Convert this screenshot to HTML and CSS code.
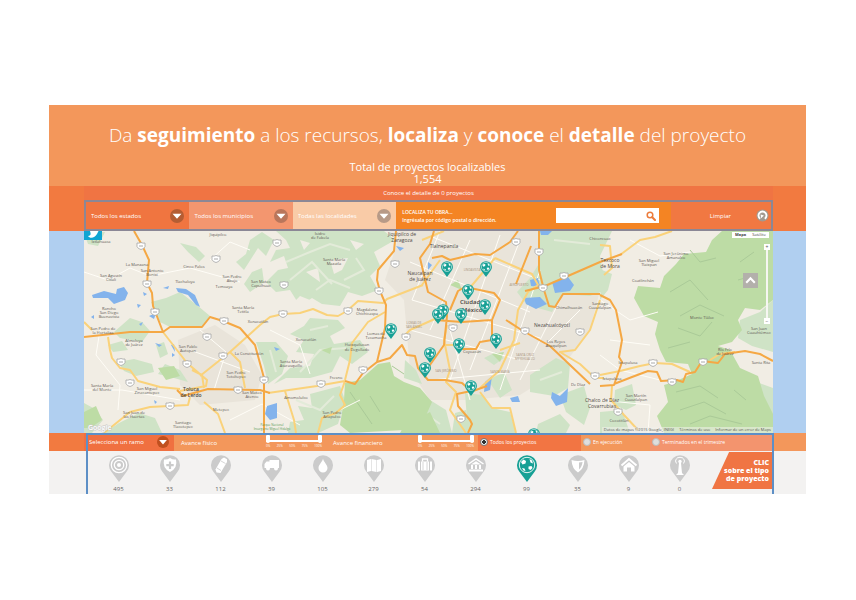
FILE: index.html
```html
<!DOCTYPE html>
<html lang="es">
<head>
<meta charset="utf-8">
<title>Proyectos localizables</title>
<link rel="stylesheet" href="styles.css">
</head>
<body>
<svg class="defs" aria-hidden="true">
  <symbol id="pin" viewBox="0 0 20 27"><path d="M10 27L2.6 17A10 10 0 1 1 17.4 17Z" fill="currentColor"/></symbol>
  <symbol id="ball" viewBox="0 0 20 27">
    <path d="M10 27L2.6 17A10 10 0 1 1 17.4 17Z" fill="#17a095"/>
    <circle cx="10" cy="10" r="7.7" fill="#17a095" stroke="#e4f4f2" stroke-width="1"/>
    <path d="M4 7L6.500 4.500L9 6L8.500 8.500L5.500 9.500ZM12.500 4L15 5.500L16 8.500L13.500 7.500ZM11.500 11.500L14.500 11L15.500 13L13.500 15L11.500 14ZM5 13L7.500 13.500L8.500 16L6.500 15.500Z" fill="#fff"/>
  </symbol>
  <symbol id="drop" viewBox="0 0 14 14"><circle cx="7" cy="7" r="7" fill="currentColor"/><path d="M2.500 4.800H11.500L7 9.800Z" fill="#fff"/></symbol>
  <symbol id="shield" viewBox="0 0 10 8"><path d="M1 1Q3 1.500 5 .5Q7 1.500 9 1V4.500Q8 7 5 7.500Q2 7 1 4.500Z" fill="#fff" stroke="#a5a5a5" stroke-width=".8"/><path d="M3 4H7" stroke="#aaa"/></symbol>
</svg>

<main class="page">
  <header class="hero">
    <h1>Da <b>seguimiento</b> a los recursos, <b>localiza</b> y <b>conoce</b> el <b>detalle</b> del proyecto</h1>
    <p class="total">Total de proyectos localizables<br><span>1,554</span></p>
  </header>

  <section class="band band-search">
    <div class="inner">
      <p class="note">Conoce el detalle de 0 proyectos</p>
      <form class="search">
        <label class="pick pick-a"><select aria-label="Estado"><option>Todos los estados</option></select><svg><use href="#drop"/></svg></label>
        <label class="pick pick-b"><select aria-label="Municipio"><option>Todos los municipios</option></select><svg><use href="#drop"/></svg></label>
        <label class="pick pick-c"><select aria-label="Localidad"><option>Todas las localidades</option></select><svg><use href="#drop"/></svg></label>
        <div class="locate">
          <label for="obra">LOCALIZA TU OBRA...<br>Ingrésala por código postal o dirección.</label>
          <div class="field">
            <input id="obra" type="text">
            <button type="button" aria-label="Buscar"><svg viewBox="0 0 10 10"><circle cx="4" cy="4" r="2.800" fill="none" stroke="#ec7c3c" stroke-width="1.500"/><path d="M6.200 6.200L9 9" stroke="#ec7c3c" stroke-width="2" stroke-linecap="round"/></svg></button>
          </div>
        </div>
        <button class="clear" type="reset"><span>Limpiar</span><svg viewBox="0 0 14 14"><circle cx="7" cy="7" r="6.500" fill="#a29a90"/><path d="M4.500 10.500A4.300 4.300 0 1 1 9.500 10.500" fill="none" stroke="#fff" stroke-width="2"/><path d="M5 6L8.500 7L5.500 10Z" fill="#fff"/></svg></button>
      </form>
    </div>
  </section>

  <section class="band band-map">
    <div class="inner map">
      <svg class="canvas" viewBox="84 231 689 202" preserveAspectRatio="xMidYMid slice" role="img" aria-label="Mapa">
        <rect x="84" y="231" width="689" height="202" fill="#f1ede4"/>
        <g fill="#e9e4da">
          <path d="M400 231H538L600 290L590 330L560 370L520 395L470 400L430 400L410 370L404 300L385 280L395 250Z"/>
          <path d="M178 340L215 325L245 345L262 375L255 400L200 405L180 385Z"/>
        </g>
        <g fill="#cfe3c6">
          <path d="M538 231H612L600 256L606 290L590 296L562 294L552 312L527 305L517 292L530 278L540 262Z"/>
          <path d="M151 302L166 298L180 292L198 306L210 316L202 327L170 327L160 322Z"/>
          <path d="M114 332L130 318L142 322L150 331L142 342L120 338ZM108 345L122 341L128 350L113 352Z"/>
          <path d="M118 362L134 359L152 364L154 372L136 376L124 371ZM156 345L164 342L168 354L160 358ZM165 364L180 370L188 382L174 378L158 374Z"/>
          <path d="M84 403L95 409L103 420L92 433H84ZM119 423L139 413L155 418L162 433H104ZM84 233L105 232L98 246L88 244ZM180 243L196 247L205 256L199 262L188 252Z"/>
          <path d="M250 240L262 232L274 240L266 256L258 248L244 270L236 262L246 254ZM252 272L262 268L264 282L250 292L244 284Z"/>
          <path d="M276 231H384L395 240L374 252L380 266L370 276L378 290L362 296L348 292L340 306L322 304L312 298L300 306L290 290L276 292L266 282L278 270L288 268L284 256L270 262L276 250L290 248L286 240Z"/>
          <path d="M310 318L338 320L345 328L330 336L334 344L360 340L368 352L352 364L340 356L332 372L310 378L286 378L274 384L290 368L310 366L314 354L296 352L304 340L290 334L304 326Z"/>
          <path d="M256 342L276 342L288 356L282 374L268 384L264 366ZM310 394L340 386L345 400L338 424L318 433H288L290 422L304 420L298 406L312 408Z"/>
          <path d="M405 360L416 370L422 384L404 378ZM405 408L430 400L446 410L452 433H404ZM455 413L466 410L470 433H452ZM488 380L504 372L512 390L500 398ZM530 375L556 358L570 364L568 388L554 396L530 392Z"/>
          <path d="M465 393L483 395L492 408L510 412L516 433H468ZM538 424L560 414L570 425L566 433H536ZM560 395L584 386L590 408L584 425L566 412ZM484 358L496 352L504 358L494 365ZM615 390L632 384L636 405L626 410L614 405ZM600 412L622 410L630 433H600Z"/>
          <path d="M740 320L760 312L773 300V352L752 346L738 338ZM740 376L773 388V418L760 410ZM602 270L612 274L608 290L600 300Z"/>
        </g>
        <g fill="#f1ede4">
          <path d="M300 240L310 243L304 250ZM330 260L348 258L342 270L334 274ZM306 272L318 268L320 282ZM350 240L364 244L356 250ZM286 310L300 296L320 304L300 312Z"/>
        </g>
        <g fill="none" stroke="#e3ebd9" stroke-width="2">
          <path d="M286 262L310 252L330 244L350 250M290 280L312 262L332 284M344 280L364 270L356 258M316 290L330 280L350 288M300 372L320 350L346 348M310 330L328 326M296 400L320 410L334 396M540 380L562 372M554 240L590 244M420 410L440 424M270 350L276 372"/>
        </g>
        <g fill="#bddca5">
          <path d="M722 231H773V300L760 310L745 308L738 320L742 330L732 342L718 346L730 350L740 368L758 376L764 396L773 414V433H664L657 416L668 402L664 385L674 382L692 374L688 364L666 362L660 350L655 334L658 322L644 316L634 298L638 286L660 288L664 276L676 264L684 254L706 252L712 240Z"/>
          <path d="M345 383L360 380L378 364L390 362L394 376L404 382L420 388L432 402L424 420L404 430L350 433L340 425L344 400ZM321 350L332 347L330 354ZM158 368L174 366L180 376L166 380ZM84 412L96 406L102 420L90 428L84 428ZM492 354L504 352L500 362ZM450 285L458 280L462 290ZM404 426L430 412L440 433H400Z"/>
        </g>
        <g fill="none" stroke="#aaca98">
          <path d="M690 250L700 262L716 258M670 292L690 280L708 300M680 316L700 305L724 316M678 328L700 336L712 322M668 348L690 342M676 392L700 386L718 398M680 410L704 402L726 414M690 424L710 416L742 424M734 390L746 400M740 262L754 252M738 280L752 276M370 396L380 412M350 392L372 424M392 366L404 374"/>
        </g>
        <g fill="none" stroke="#fffdf7">
          <path d="M84 272L108 280L130 268L150 276L190 268L240 282M100 330L96 355L120 385L118 410M84 390L122 390L180 400M210 260L230 242L250 250M200 330L226 352L214 390M190 350L250 372M230 420L262 404L300 425M270 330L300 345L310 374M340 410L360 400M600 300L630 320L658 312M610 340L650 345M600 355L620 370L660 380M630 240L660 256L690 252M600 400L650 405L648 433"/>
          <path d="M430 236L540 280M410 262L530 312M412 300L540 338M410 330L520 360M432 380L540 370M440 231L412 300M470 240L430 330M500 235L450 380M520 240L470 370M540 270L500 390M560 300L520 380M450 330L470 400M580 310L545 345"/>
        </g>
        <g fill="#83b3ec">
          <path d="M92 295L104 291L116 294L117 289L124 287L128 293L125 300L114 304L108 298L93 298Z"/>
          <path d="M176 288L186 289L195 295L200 307L196 305L188 295L178 292ZM91 317L94 315L94 319ZM163 288L169 286L168 289ZM137 304L141 305L138 308ZM143 292L147 294L144 296ZM149 316L156 313L154 319ZM155 343L162 345L159 347ZM171 345L174 344L175 352ZM172 353L175 355L172 357ZM154 400L157 402L155 404ZM139 324L143 322L141 326Z"/>
          <path d="M267 406L277 403L277 418L270 420L265 414ZM552 282L568 277L574 285L570 291L555 293ZM530 280L538 278L540 287L531 286ZM524 298L540 297L547 304L536 309L526 304ZM540 231H552L548 235H541ZM595 396L598 389ZM552 392L560 396L568 388L567 402L556 406L551 398ZM485 382L492 376L490 390L484 392ZM510 398L518 396L520 402L512 402ZM396 246L404 248L400 251ZM428 262L432 265L428 270ZM274 347L280 349L276 351Z"/>
        </g>
        <g fill="none" stroke="#fad27a" stroke-width="2" stroke-linejoin="round">
          <path d="M84 322L92 330M108 337L110 350L112 358L120 368L130 370L138 381L160 387L180 389M163 332L187 363L207 380L206 386L180 391M200 376L230 352L260 325L270 317L283 314L300 313L313 309L327 315L338 316L347 311L358 301L383 303L387 299L423 285M192 370L202 375L204 388M230 352L240 362L245 388M104 433L130 412L150 407L188 405L190 397M204 402L218 414L225 433M268 393L317 386L345 381M285 391L294 420L296 433M345 381L340 395L345 405L336 413L322 418L318 433M345 380L350 360L352 343L368 322L385 312"/>
          <path d="M422 240L444 231M495 258L532 274L538 285L528 292L518 310L514 340L500 370L480 388M468 290L495 258M437 318L410 330L404 336M447 325L444 340L450 370L446 382L456 392L450 410L466 433M480 392L492 408L510 408L516 433M444 345L459 345M600 300L590 330L575 350L560 352L580 364L595 378L604 378M620 255L640 240L655 237L672 231M600 245L610 246L612 268L604 275M600 375L620 371L640 366L655 363L672 364L690 372M612 386L611 400L624 415L638 430M710 360L720 354L735 352M520 343L500 350M440 260L422 285"/>
        </g>
        <g fill="none" stroke="#f5a844" stroke-width="2" stroke-linejoin="round">
          <path d="M134 231L142 245L149 260L147 283L152 293L153 306L163 332L170 327L202 327L210 317L223 321L240 328L255 345L264 378L264 433M84 337L130 332L163 332M177 390L183 396L208 389L260 390L270 393M396 231L394 251L378 270L377 280L380 291L386 305L385 328L377 362M345 381L355 384L363 373L377 362L390 358L402 345L407 355L415 356L418 368L428 380L445 380L462 383L471 391L457 394L458 406L470 420L472 424L468 433"/>
          <path d="M434 231L430 244L420 258L428 292L446 302L447 316L444 345L425 372M432 258L442 256L450 260L475 254L490 255L510 242L518 231M539 231V270L544 290L549 306L555 307L563 294L600 294M525 291L545 286L600 262M531 246L516 284M435 320L462 322L492 320L500 300L494 293L465 287L458 291L450 310M492 320V340L480 342L476 349L459 349M506 320L523 331L550 346L590 384M600 295L610 300L616 310L622 340L619 357L622 362L614 385L600 386M614 384L632 377L648 371L657 372L661 381L677 380L683 382L686 374L695 372L702 361L718 363L725 354L745 351L760 354L773 361M487 386L473 391M600 262L622 254"/>
        </g>
        <g class="roads">
          <use href="#shield" x="136" y="242" width="10" height="8"/><use href="#shield" x="211" y="255" width="10" height="8"/><use href="#shield" x="142" y="280" width="10" height="8"/><use href="#shield" x="150" y="308" width="10" height="8"/><use href="#shield" x="202" y="333" width="10" height="8"/><use href="#shield" x="219" y="317" width="10" height="8"/><use href="#shield" x="116" y="358" width="10" height="8"/><use href="#shield" x="182" y="360" width="10" height="8"/><use href="#shield" x="218" y="352" width="10" height="8"/><use href="#shield" x="125" y="379" width="10" height="8"/><use href="#shield" x="233" y="386" width="10" height="8"/><use href="#shield" x="165" y="402" width="10" height="8"/>
          <use href="#shield" x="272" y="239" width="10" height="8"/><use href="#shield" x="279" y="281" width="10" height="8"/><use href="#shield" x="278" y="310" width="10" height="8"/><use href="#shield" x="343" y="307" width="10" height="8"/><use href="#shield" x="374" y="287" width="10" height="8"/><use href="#shield" x="390" y="260" width="10" height="8"/><use href="#shield" x="401" y="333" width="10" height="8"/><use href="#shield" x="358" y="366" width="10" height="8"/><use href="#shield" x="316" y="380" width="10" height="8"/><use href="#shield" x="259" y="376" width="10" height="8"/>
          <use href="#shield" x="511" y="238" width="10" height="8"/><use href="#shield" x="534" y="248" width="10" height="8"/><use href="#shield" x="559" y="272" width="10" height="8"/><use href="#shield" x="538" y="284" width="10" height="8"/><use href="#shield" x="520" y="327" width="10" height="8"/><use href="#shield" x="575" y="328" width="10" height="8"/><use href="#shield" x="590" y="372" width="10" height="8"/><use href="#shield" x="448" y="324" width="10" height="8"/><use href="#shield" x="456" y="415" width="10" height="8"/><use href="#shield" x="648" y="359" width="10" height="8"/><use href="#shield" x="698" y="358" width="10" height="8"/><use href="#shield" x="667" y="378" width="10" height="8"/><use href="#shield" x="613" y="408" width="10" height="8"/>
        </g>
        <g class="names">
          <text x="101" y="243">Ixtlahuaca</text><text x="218" y="236">Jiquipilco</text><text x="137" y="266">La Manzana</text><text x="152" y="272">San Antonio<tspan x="152" dy="4">Bonixi</tspan></text><text x="194" y="268">Cinco Palos</text><text x="111" y="277">San Agustín<tspan x="111" dy="4">Citlali</tspan></text><text x="185" y="283">Tlachaloya</text><text x="232" y="278">San Pedro<tspan x="232" dy="4">Abajo</tspan></text><text x="224" y="288">Temoaya</text><text x="109" y="310">Rancho<tspan x="109" dy="4">San Diego</tspan><tspan x="109" dy="4">Buenavista</tspan></text><text x="243" y="309">Santa María<tspan x="243" dy="4">Tetitla</tspan></text><text x="103" y="330">San Pedro de<tspan x="103" dy="4">la Hortaliza</tspan></text><text x="134" y="342">Almoloya<tspan x="134" dy="4">de Juárez</tspan></text><text x="188" y="348">San Pablo<tspan x="188" dy="4">Autopan</tspan></text><text x="249" y="355">La Constitución</text><text x="236" y="374">San Pedro<tspan x="236" dy="4">Totoltepec</tspan></text><text x="102" y="387">Santa María<tspan x="102" dy="4">del Monte</tspan></text><text x="147" y="390">San Miguel<tspan x="147" dy="4">Zinacantepec</tspan></text><text x="134" y="414">San Juan de<tspan x="134" dy="4">las Huertas</tspan></text><text x="183" y="424">Santiago<tspan x="183" dy="4">Tlacotepec</tspan></text><text x="221" y="411">Metepec</text><text x="252" y="394">San Mateo<tspan x="252" dy="4">Atenco</tspan></text>
          <text x="320" y="235">Isidro<tspan x="320" dy="4">de Fabela</tspan></text><text x="334" y="261">Santa María<tspan x="334" dy="4">Mazatla</tspan></text><text x="261" y="283">San Mateo<tspan x="261" dy="4">Capulhuac</tspan></text><text x="367" y="311">Magdalena<tspan x="367" dy="4">Chichicaspa</tspan></text><text x="306" y="341">Xonacatlán</text><text x="258" y="323">Xonacatlán</text><text x="357" y="346">Huixquilucan<tspan x="357" dy="5">de Degollado</tspan></text><text x="291" y="363">Santa María<tspan x="291" dy="4">Atarasquillo</tspan></text><text x="336" y="379">Fresno</text><text x="296" y="399">Amomolulco</text><text x="332" y="414">San Pedro<tspan x="332" dy="4">Atlapulco</tspan></text><text x="376" y="335">Lomas de<tspan x="376" dy="4">Tecamacha</tspan></text>
          <text x="569" y="309">Chimalhuacán</text><text x="600" y="240">Chiconcuac</text><text x="676" y="255">San Jerónimo<tspan x="676" dy="4">Amanalco</tspan></text><text x="649" y="262">San Miguel<tspan x="649" dy="4">Tlaixpan</tspan></text><text x="643" y="282">Coatlinchán</text><text x="600" y="305">Santiago<tspan x="600" dy="4">Cuautlalpan</tspan></text><text x="556" y="343">Los Reyes<tspan x="556" dy="4">Acaquilpan</tspan></text><text x="628" y="364">Ixtapaluca</text><text x="578" y="386">De Díaz</text><text x="612" y="380">Ixtapaluca</text><text x="636" y="397">San Martín<tspan x="636" dy="4">Cuautlalpan</tspan></text><text x="702" y="319">Monte Tláloc</text><text x="725" y="351">Río Frío<tspan x="725" dy="4">de Juárez</tspan></text><text x="759" y="330">San Juan<tspan x="759" dy="4">Cuauhtémoc</tspan></text><text x="761" y="364">Santa Rita</text><text x="472" y="353">Coyoacán</text><text x="619" y="422">Cocotitlán</text>
        </g>
        <g class="names faint"><text x="525" y="356">SANTA CRUZ<tspan x="525" dy="4">MEYEHUALCO</tspan></text><text x="500" y="373">SANTA MARÍA</text><text x="446" y="372">SAN JERÓNIMO</text><text x="414" y="324">LOMAS DE<tspan x="414" dy="4">SAN ÁNGEL</tspan></text><text x="519" y="286">AEROPUERTO</text><text x="472" y="271">LINDAVISTA</text></g>
        <g class="names towns"><text x="402" y="236">Jiquipilco de<tspan x="402" dy="6">Zaragoza</tspan></text><text x="444" y="248">Tlalnepantla</text><text x="420" y="275">Naucalpan<tspan x="420" dy="6">de Juárez</tspan></text><text x="552" y="327">Nezahualcóyotl</text><text x="610" y="262">Texcoco<tspan x="610" dy="6">de Mora</tspan></text><text x="602" y="402">Chalco de Díaz<tspan x="602" dy="6">Covarrubias</tspan></text></g>
        <g class="names city"><text x="191" y="391">Toluca<tspan x="191" dy="6">de Lerdo</tspan></text><text x="470" y="304" class="big">Ciudad<tspan x="472" dy="8">México</tspan></text></g>
        <g class="names park"><text x="272" y="426">Parque Nacional<tspan x="272" dy="4">Insurgente Miguel Hidalgo</tspan></text></g>
        <text class="google" x="88" y="430">Google</text>
        <g>
          <use href="#ball" x="385" y="323" width="12" height="16"/><use href="#ball" x="441" y="261" width="12" height="16"/><use href="#ball" x="480" y="261" width="12" height="16"/><use href="#ball" x="462" y="284" width="12" height="16"/><use href="#ball" x="479" y="299" width="12" height="16"/><use href="#ball" x="437" y="304" width="12" height="16"/><use href="#ball" x="432" y="308" width="12" height="16"/><use href="#ball" x="455" y="308" width="12" height="16"/><use href="#ball" x="453" y="338" width="12" height="16"/><use href="#ball" x="490" y="333" width="12" height="16"/><use href="#ball" x="424" y="347" width="12" height="16"/><use href="#ball" x="419" y="362" width="12" height="16"/><use href="#ball" x="465" y="380" width="12" height="16"/><use href="#ball" x="528" y="428" width="12" height="16"/>
        </g>
      </svg>
      <a class="tweet" href="#" aria-label="Twitter"><svg viewBox="0 0 18 10"><path d="M6 0H13L15 -1L13 3C11 7 6 8 4 5C7 5 7 3 6 0Z" fill="#fff"/></svg></a>
      <div class="kind"><button type="button"><b>Mapa</b></button><button type="button">Satélite</button></div>
      <div class="zoom"><button type="button">+</button><i></i><button type="button">−</button></div>
      <a class="top" href="#" aria-label="Subir"><svg viewBox="0 0 14 14"><path d="M3 9L7 5L11 9" fill="none" stroke="#fff" stroke-width="2"/></svg></a>
      <p class="credits"><span>Datos de mapas ©2015 Google, INEGI</span><span>Términos de uso</span><span>Informar de un error de Maps</span></p>
    </div>
  </section>

  <section class="panel">
    <div class="band band-filter">
      <div class="inner filters">
        <label class="pick pick-d"><select aria-label="Ramo"><option>Selecciona un ramo</option></select><svg><use href="#drop"/></svg></label>
        <div class="range"><span>Avance físico</span>
          <div class="slider"><input type="range" value="0" aria-label="Avance físico mínimo"><input type="range" value="100" aria-label="Avance físico máximo"><div class="ticks"><i>0%</i><i>25%</i><i>50%</i><i>75%</i><i>100%</i></div></div>
        </div>
        <div class="range"><span>Avance financiero</span>
          <div class="slider"><input type="range" value="0" aria-label="Avance financiero mínimo"><input type="range" value="100" aria-label="Avance financiero máximo"><div class="ticks"><i>0%</i><i>25%</i><i>50%</i><i>75%</i><i>100%</i></div></div>
        </div>
        <label class="radio radio-a"><input type="radio" name="estado" checked>Todos los proyectos</label>
        <label class="radio radio-b"><input type="radio" name="estado">En ejecución</label>
        <label class="radio radio-c"><input type="radio" name="estado">Terminados en el trimestre</label>
      </div>
    </div>
    <div class="band band-types">
      <div class="inner types">
        <div class="kinds">
          <button type="button"><svg viewBox="0 0 20 27"><use href="#pin"/><g fill="none" stroke="#fff" stroke-width="1.300"><circle cx="10" cy="10" r="7.700"/><circle cx="10" cy="10" r="4.700"/></g><circle cx="10" cy="10" r="2" fill="#fff"/></svg>495</button>
          <button type="button"><svg viewBox="0 0 20 27"><use href="#pin"/><path d="M10 3Q13 5 16 4.500Q18 13 10 17Q2 13 4 4.500Q7 5 10 3Z" fill="#fff"/><path d="M10 6.500V14M6.300 10.200H13.700" stroke="#cbcbcb" stroke-width="2.200"/></svg>33</button>
          <button type="button"><svg viewBox="0 0 20 27"><use href="#pin"/><path d="M10.500 4L13 2.500L16 4.300V7L9.500 18L5.500 17.500L4.500 14.500Z" fill="#fff"/><path d="M10 6L14.500 8.500M6 13L10 15.500" stroke="#cbcbcb" stroke-width=".8"/></svg>112</button>
          <button type="button"><svg viewBox="0 0 20 27"><use href="#pin"/><path d="M7.500 5H17V13H7.500ZM2.500 9L4.500 6.500H8V13H2.500Z" fill="#fff"/><circle cx="6" cy="13.500" r="2" fill="#fff"/><circle cx="14" cy="13.500" r="2" fill="#fff"/></svg>39</button>
          <button type="button"><svg viewBox="0 0 20 27"><use href="#pin"/><path d="M10 3.500C10.500 7 14.500 9.500 14.500 13A4.500 4.500 0 0 1 5.500 13C5.500 9.500 9.500 7 10 3.500Z" fill="#fff"/></svg>105</button>
          <button type="button"><svg viewBox="0 0 20 27"><use href="#pin"/><path d="M3 5L7 4V16L3 17ZM7.500 4L12.500 5V17L7.500 16ZM13 5L17 4V16L13 17Z" fill="#fff"/></svg>279</button>
          <button type="button"><svg viewBox="0 0 20 27"><use href="#pin"/><path d="M3 6.500H5V15.500H3ZM6 6.500H14V15.500H6ZM15 6.500H17V15.500H15Z" fill="#fff"/><path d="M7.500 6.500V4H12.500V6.500" fill="none" stroke="#fff" stroke-width="1.300"/><path d="M8 7V15M12 7V15" stroke="#cbcbcb" stroke-width=".8"/></svg>54</button>
          <button type="button"><svg viewBox="0 0 20 27"><use href="#pin"/><path d="M2.500 9L10 4L17.500 9" fill="none" stroke="#fff" stroke-width="1.500"/><path d="M5 9.500L10 6.300L15 9.500ZM3 14.500H17V16.500H3Z" fill="#fff"/><path d="M6 10V14M10 10V14M14 10V14" stroke="#fff" stroke-width="2"/></svg>294</button>
          <button type="button" class="on"><svg viewBox="0 0 20 27"><use href="#ball"/></svg>99</button>
          <button type="button"><svg viewBox="0 0 20 27"><use href="#pin"/><path d="M3.500 5Q10 7 16.500 5Q16 14 10 17.500Q4 14 3.500 5Z" fill="#fff"/><path d="M11 7.500L14.500 7Q14 12 11 14.500Z" fill="#cbcbcb"/></svg>35</button>
          <button type="button"><svg viewBox="0 0 20 27"><use href="#pin"/><path d="M2.500 10.500L10 4L17.500 10.500" fill="none" stroke="#fff" stroke-width="2"/><path d="M4.500 11.500L10 7L15.500 11.500V16.500H12V12.500H8V16.500H4.500Z" fill="#fff"/></svg>9</button>
          <button type="button"><svg viewBox="0 0 20 27"><use href="#pin"/><path d="M9 8H11L12 18L14 20H6L8 18Z" fill="#fff"/><circle cx="10" cy="6.500" r="1.700" fill="#fff"/><path d="M6.500 8.500Q4.500 6 6.500 3.500M13.500 8.500Q15.500 6 13.500 3.500M7 3Q10 1.500 13 3" fill="none" stroke="#fff"/></svg>0</button>
        </div>
        <p class="cta">CLIC<br>sobre el tipo<br>de proyecto</p>
      </div>
    </div>
  </section>
</main>
</body>
</html>
```

FILE: styles.css
```css
* { box-sizing: border-box; }
body {
  margin: 0;
  padding: 105px 50px 106px 49px;
  background: #fff;
  color: #fff;
  font-family: "Open Sans", "Noto Sans", sans-serif;
  font-size: 6px;
  line-height: 8px;
}
h1, p { margin: 0; }
button, input, select {
  margin: 0;
  padding: 0;
  border: 0;
  background: none;
  color: inherit;
  font: inherit;
}
svg { display: block; }
.defs { position: absolute; width: 0; height: 0; }

.hero {
  padding-top: 16px;
  height: 81px;
  background: #f3975b;
  text-align: center;
}
h1 { font-size: 19px; line-height: 28px; font-weight: 300; white-space: nowrap; }
h1 b { font-weight: 700; }
.total { margin-top: 12px; font-size: 11px; line-height: 12px; }

.band { padding: 0 33px 0 35px; }
.inner { position: relative; }
.band-search { background: #f27a40; }
.note {
  background: #f07443;
  text-align: center;
  line-height: 14px;
}
.search {
  display: grid;
  grid-template-columns: 104fr 104fr 104fr 276fr 101fr;
  height: 31px;
  border: 2px solid #8b8795;
}
.pick { display: flex; align-items: center; padding: 0 5px; min-width: 0; }
.pick select { flex: 1; min-width: 0; appearance: none; }
.pick option { color: #444; }
.pick svg { width: 14px; height: 14px; }
.pick-a { background: #f07540; color: #fff; }
.pick-a svg { color: #b45d33; }
.pick-b { background: #f3966f; color: #fff; }
.pick-b svg { color: #b9765b; }
.pick-c { background: #f9cba7; color: #fff; }
.pick-c svg { color: #b79a87; }
.locate {
  display: flex;
  align-items: center;
  justify-content: space-between;
  padding: 0 12px 0 6px;
  background: #f48423;
  font-size: 5px;
  font-weight: 600;
}
.field { display: flex; align-items: center; width: 103px; height: 15px; padding-right: 3px; background: #fff; }
.field input { flex: 1; min-width: 0; height: 15px; padding: 0 3px; color: #555; }
.field svg { width: 10px; height: 10px; }
.clear { display: flex; align-items: center; justify-content: flex-end; gap: 25px; padding-right: 2px; background: #f17842; }
.clear svg { width: 13px; height: 13px; }

.band-map { background: #b0cff0; }
.map { overflow: hidden; }
.canvas { width: 100%; height: 202px; }
.names { fill: #5c5752; font-size: 4px; text-anchor: middle; }
.faint { fill: #a8927c; font-size: 3px; }
.towns { fill: #4f4a46; font-size: 5px; }
.city { fill: #4a4541; font-size: 5px; font-weight: 600; }
.big { font-size: 6px; }
.park { fill: #5a9a5a; font-size: 3px; }
.google { fill: #fff; stroke: #c9c9c9; stroke-width: 1px; paint-order: stroke; font-size: 7px; font-weight: 600; }
.tweet { position: absolute; left: 0; top: 0; width: 18px; height: 9px; background: #0fa5d3; }
.kind { position: absolute; right: 4px; top: 1px; display: flex; background: #fff; color: #444; font-size: 4px; line-height: 6px; }
.kind button { padding: 0 3px; }
.zoom { position: absolute; right: 3px; top: 13px; display: grid; justify-items: center; }
.zoom i { width: 2px; height: 68px; background: #f6f6f2; }
.zoom button { width: 6px; height: 6px; background: #fff; color: #555; font-size: 5px; line-height: 5px; }
.top { position: absolute; right: 15px; top: 42px; width: 15px; height: 15px; background: #b3b0ab; }
.credits {
  position: absolute;
  right: 0;
  bottom: 0;
  display: flex;
  gap: 5px;
  padding: 0 2px;
  background: rgba(240, 240, 235, .55);
  color: #555;
  font-size: 4px;
  line-height: 6px;
}

.panel { position: relative; }
.panel::after {
  content: "";
  position: absolute;
  inset: 0 32px 0 37px;
  border: 2px solid #5d8fc6;
  border-bottom: 0;
  pointer-events: none;
}
.band-filter { background: linear-gradient(90deg, #f27a40 50%, #f3975b 50%); }
.filters {
  display: grid;
  grid-template-columns: 90fr 152fr 152fr 103fr 69fr 123fr;
  height: 18px;
}
.pick-d { background: #f07040; color: #fff; }
.pick-d svg { width: 12px; height: 12px; color: #c0501f; }
.range { display: flex; align-items: center; justify-content: space-between; padding: 2px 4px 0 7px; background: #f3975b; }
.slider { display: grid; width: 56px; align-self: start; }
.slider input {
  grid-area: 1 / 1;
  width: 100%;
  height: 8px;
  appearance: none;
  pointer-events: none;
  background: linear-gradient(#fff, #fff) center 5px / 100% 2px no-repeat;
}
.slider input::-webkit-slider-thumb { appearance: none; width: 4px; height: 8px; background: #fff; border-radius: 1px 1px 2px 2px; pointer-events: auto; }
.ticks { grid-row: 2; display: flex; justify-content: space-between; margin-top: 1px; font-size: 3px; line-height: 5px; }
.ticks i { font-style: normal; }
.radio { display: flex; align-items: center; gap: 2px; padding-left: 2px; font-size: 5px; white-space: nowrap; }
.radio input { appearance: none; width: 8px; height: 8px; border: 1px solid #bbb; border-radius: 50%; background: #dedede; }
.radio input:checked { background: radial-gradient(#333 40%, #eee 50%); border-color: #777; }
.radio-a { background: #f27543; }
.radio-b { background: #f3975b; }
.radio-c { background: #f3946e; }

.band-types { background: #f3f2f1; }
.types { display: grid; grid-template-columns: 628fr 61fr; height: 43px; }
.kinds { display: grid; grid-template-columns: repeat(12, 1fr); padding: 4px 7px 0 9px; }
.kinds button {
  display: flex;
  flex-direction: column;
  align-items: center;
  justify-content: space-between;
  height: 38px;
  color: #666;
}
.kinds svg { width: 20px; height: 27px; color: #cbcbcb; }
.kinds .on svg { width: 22px; }
.cta {
  align-self: start;
  height: 37px;
  margin-top: 1px;
  padding: 7px 4px 0 0;
  background: #f07543;
  clip-path: polygon(28% 0, 100% 0, 100% 100%, 0 100%);
  text-align: right;
  font-size: 7px;
  font-weight: 800;
  white-space: nowrap;
}
```
